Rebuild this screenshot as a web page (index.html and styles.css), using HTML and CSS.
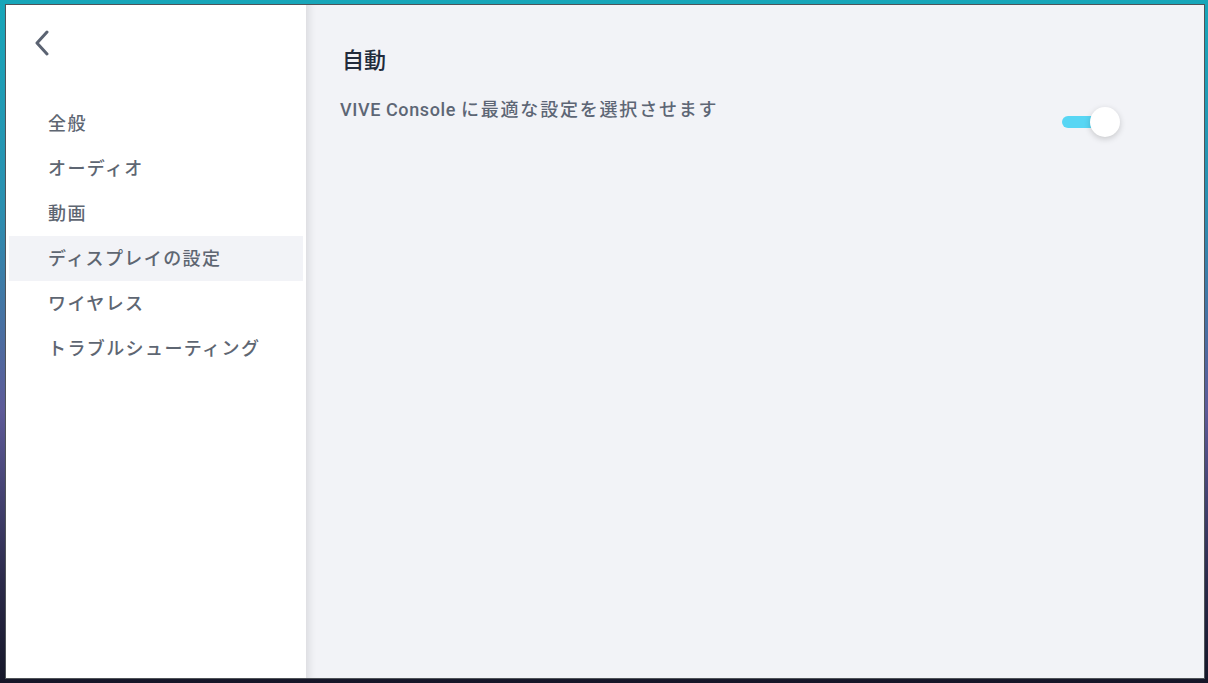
FILE: index.html
```html
<!DOCTYPE html>
<html lang="ja">
<head>
    <meta charset="UTF-8">
    <meta name="viewport" content="width=device-width, initial-scale=1.0">
    <title>設定</title>
    <link rel="stylesheet" href="styles.css">
</head>
<body>
    <div class="window">
        <!-- Sidebar menu -->
        <div class="sidebar">
            <button class="back" aria-label="戻る">
                <svg width="16" height="26" viewBox="0 0 16 26">
                    <path d="M13 2 L3 13 L13 24" fill="none" stroke="#5b6372" stroke-width="3" stroke-linecap="round" stroke-linejoin="round"/>
                </svg>
            </button>
            <ul class="menu">
                <li>全般</li>
                <li>オーディオ</li>
                <li>動画</li>
                <li class="active">ディスプレイの設定</li>
                <li>ワイヤレス</li>
                <li>トラブルシューティング</li>
            </ul>
        </div>

        <!-- Settings panel -->
        <div class="content">
            <h2 class="title">自動</h2>
            <div class="setting-row">
                <p class="setting-text">VIVE Console <span class="jp">に最適な設定を選択させます</span></p>
                <div class="toggle on">
                    <span class="track"></span>
                    <span class="knob"></span>
                </div>
            </div>
        </div>
    </div>
</body>
</html>
```

FILE: styles.css
```css
html, body {
    margin: 0;
    height: 100%;
}

body {
    font-family: Roboto, "Noto Sans CJK JP", sans-serif;
    background: linear-gradient(180deg, #17a6b9 0%, #2a8fb0 30%, #5d5a98 60%, #2b2a4a 85%, #151628 100%);
    padding: 4px 3px 4px 5px;
    box-sizing: border-box;
}

.window {
    display: flex;
    height: 100%;
    border: 1px solid #4f5358;
    box-sizing: border-box;
    background-color: #f2f3f7;
}

.sidebar {
    width: 300px;
    flex-shrink: 0;
    background-color: #fff;
    padding: 0 3px;
    box-sizing: border-box;
    position: relative;
    z-index: 1;
}

.back {
    display: block;
    margin: 23px 0 0 23px;
    padding: 0;
    border: none;
    background: none;
    width: 20px;
    height: 32px;
    cursor: pointer;
}

.menu {
    list-style: none;
    margin: 41px 0 0;
    padding: 0;
}

.menu li {
    height: 45px;
    line-height: 45px;
    padding-left: 39px;
    font-size: 18px;
    font-weight: 500;
    letter-spacing: 1.4px;
    color: #5e6672;
}

.menu li.active {
    background-color: #f2f3f7;
}

.content {
    flex: 1;
    padding: 40px 84px 0 34px;
    box-shadow: inset 10px 0 10px -8px rgba(0, 0, 0, 0.12);
}

.title {
    margin: 0 0 0 2px;
    font-size: 22px;
    font-weight: 500;
    line-height: 32px;
    color: #222b3b;
}

.setting-row {
    display: flex;
    justify-content: space-between;
    align-items: flex-start;
    margin-top: 20px;
}

.setting-text {
    margin: 0;
    font-size: 18px;
    font-weight: 500;
    line-height: 26px;
    letter-spacing: 0.6px;
    color: #5d6675;
}

.setting-text .jp {
    letter-spacing: 1.8px;
}

.toggle {
    position: relative;
    width: 58px;
    height: 30px;
    margin-top: 10px;
}

.toggle .track {
    position: absolute;
    left: 0;
    top: 9px;
    width: 42px;
    height: 12px;
    border-radius: 6px;
    background-color: #58d6f4;
}

.toggle .knob {
    position: absolute;
    right: 0;
    top: 0;
    width: 30px;
    height: 30px;
    border-radius: 50%;
    background-color: #fff;
    box-shadow: 0 2px 6px rgba(0, 0, 0, 0.18);
}
```
